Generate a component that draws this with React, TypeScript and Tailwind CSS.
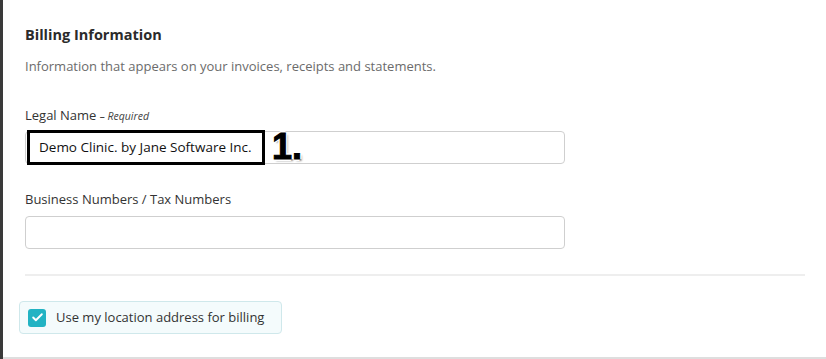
import { Check } from "lucide-react";

export default function App() {
  return (
    <div className="flex h-[359px] w-[826px] overflow-hidden bg-white font-['Open_Sans',sans-serif] text-[#333]">
      <div className="w-[3px] shrink-0 bg-[#3a3a3a]" />
      <div className="flex min-w-0 flex-1 flex-col border-b-2 border-[#dedede]">
        <div className="flex flex-col pl-[22px] pr-[21px] pt-[25px]">
          <h2 className="text-[14.5px] font-bold leading-[20px] text-[#2b2b2b]">Billing Information</h2>
          <p className="mt-[12px] text-[13px] leading-[18px] text-[#6b6b6b]">
            Information that appears on your invoices, receipts and statements.
          </p>

          <label className="mt-[31px] text-[13px] leading-[18px] text-[#333]">
            Legal Name <span className="text-[10.5px] italic text-[#444]">– Required</span>
          </label>
          <div className="relative mt-[6px] h-[33px] w-[540px] rounded-[4px] border border-[#cfcfcf] bg-white">
            <div className="absolute left-[1px] top-[-2px] flex h-[35px] w-[238px] items-center border-[3px] border-black bg-white pl-[9px] text-[13.5px] text-[#111]">
              Demo Clinic. by Jane Software Inc.
            </div>
            <span className="absolute left-[246px] top-[-5px] font-['Liberation_Sans',sans-serif] text-[36px] font-black leading-[40px] text-black [-webkit-text-stroke:1px_#000] [text-shadow:2px_0_0_#fff,-2px_0_0_#fff,0_2px_0_#fff,0_-2px_0_#fff,2px_2px_2px_#888]">
              1.
            </span>
          </div>

          <label className="mt-[26px] text-[13px] leading-[18px] text-[#333]">
            Business Numbers / Tax Numbers
          </label>
          <div className="mt-[8px] h-[33px] w-[540px] rounded-[4px] border border-[#cfcfcf] bg-white" />

          <div className="mt-[25px] h-[2px] w-[780px] bg-[#eeeeee]" />

          <div className="ml-[-6px] mt-[25px] flex h-[33px] w-[263px] items-center gap-[10px] rounded-[4px] border border-[#cfe8eb] bg-[#f4fbfc] pl-[8px]">
            <span className="flex h-[18px] w-[18px] items-center justify-center rounded-[3px] bg-[#22b3c3]">
              <Check className="h-[13px] w-[13px] text-white" strokeWidth={3.5} />
            </span>
            <span className="text-[13px] text-[#333]">Use my location address for billing</span>
          </div>
        </div>
      </div>
    </div>
  );
}
